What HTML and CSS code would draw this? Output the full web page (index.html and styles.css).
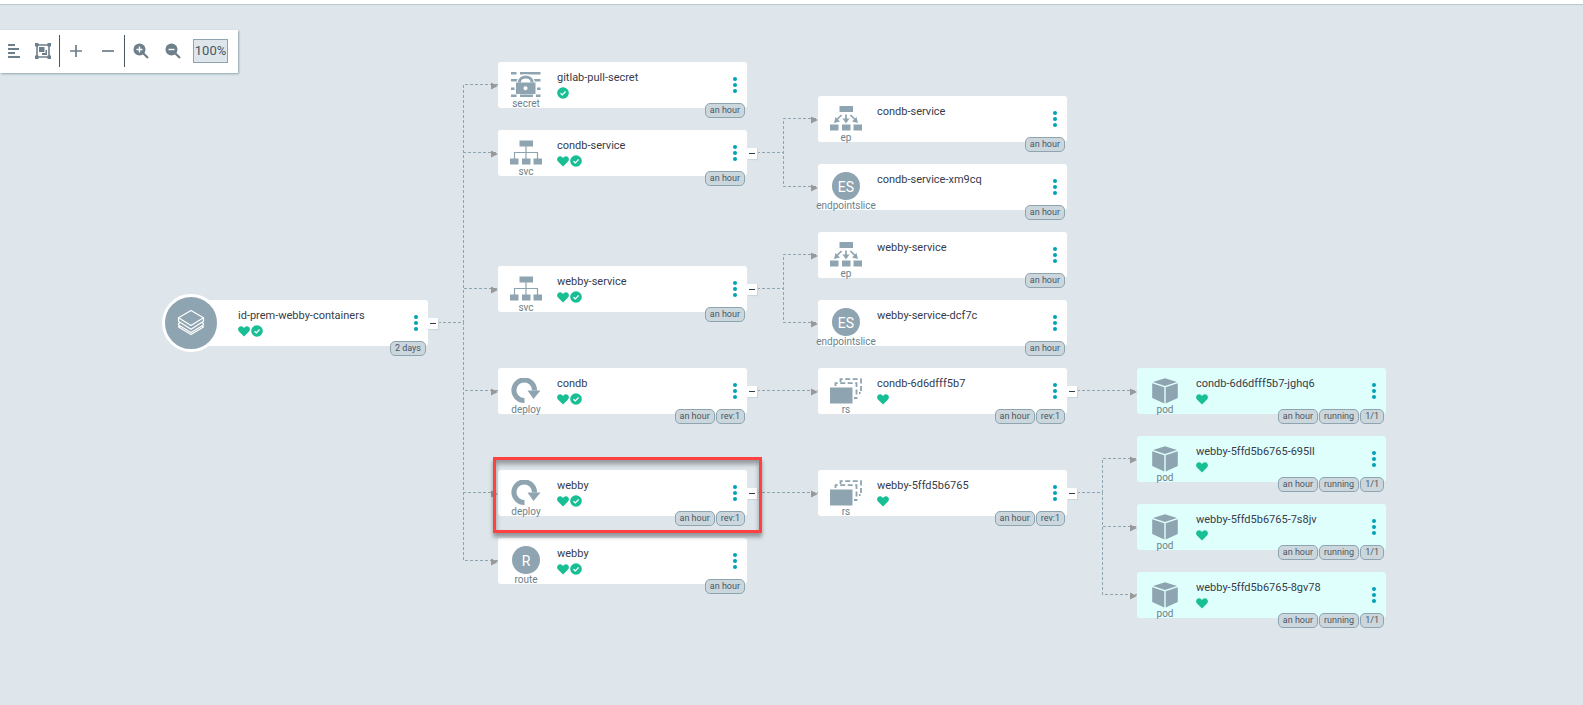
FILE: index.html
```
<!DOCTYPE html>
<html lang="en">
<head>
<meta charset="utf-8">
<title>Application resource tree</title>
<link rel="stylesheet" href="styles.css">
</head>
<body>
<svg class="defs" aria-hidden="true">
  <symbol id="heart" viewBox="0 0 12 11"><path d="M6 10.6 1 5.6C-.2 4.300-.2 2.300.9 1.200 2.200 0 4.100 0 5.300 1.200L6 1.900 6.700 1.200C7.900 0 9.800 0 11.100 1.200 12.200 2.300 12.200 4.300 11 5.600Z"/></symbol>
  <symbol id="check" viewBox="0 0 12 12"><circle cx="6" cy="6" r="5.800"/><path d="M3.500 6.200 5.300 7.900 8.600 4.500" fill="none" stroke="#fff" stroke-width="1.300"/></symbol>
  <symbol id="secret" viewBox="0 0 32 26"><path d="M1 0h5.500v2.500H1zM10 0h20.500v2.500H10zM1 7h7v2.500H1zM24 7h6.500v2.500H24zM1 15.500h3.500V18H1zM27 15.500h3.500V18H27zM1 22.500h5.500V25H1zM10 22.500h13v2.500H10zM26 22.500h4.500V25H26z"/><path d="M9.500 10V9.500a6.300 5.200 0 0 1 12.500 0v.5" fill="none" stroke="#fff" stroke-width="5.500"/><path d="M9.500 10.500V9.500a6.300 5.200 0 0 1 12.500 0v1" fill="none" stroke="currentColor" stroke-width="3"/><path fill-rule="evenodd" d="M6 10.500h19.500V22H6zM15.500 14.200a2 2 0 1 0 .01 0z"/></symbol>
  <symbol id="svc" viewBox="0 0 32 26"><path d="M9.500.5h13.500v6H9.500zM0 18.500h8.500v6H0zM12 18.500h8.500v6H12zM23.500 18.500H32v6h-8.500z"/><path d="M16 6v13M4.500 19v-6.500h23V19" fill="none" stroke="currentColor" stroke-width="1.200"/></symbol>
  <symbol id="ep" viewBox="0 0 32 26"><path d="M9.500 0h13.500v6H9.500zM0 18.500h8.500v6H0zM12 18.500h8.500v6H12zM23.500 18.500H32v6h-8.500z"/><path d="M11.500 9 7 13.500M16 8.500V14M20.500 9l4.500 4.500" fill="none" stroke="currentColor" stroke-width="1.700"/><path d="m4 17 1.500-6 4.500 4.500zM12.500 12.500h7L16 17.500zM28 17l-1.500-6-4.500 4.500z"/></symbol>
  <symbol id="deploy" viewBox="0 0 32 26"><path d="M14.500 22.500A10.300 10.300 0 1 1 24.500 12.500" fill="none" stroke="currentColor" stroke-width="5"/><path d="M17.500 12.500h13L23.500 21z"/></symbol>
  <symbol id="rs" viewBox="0 0 32 26"><path d="M0 9.500h22.500v16H0z"/><path d="M5.500 8V5.200H26.500V20H24M10.500 4V1.200H31V15H29" fill="none" stroke="currentColor" stroke-width="1.800" stroke-dasharray="5 2.500"/></symbol>
  <symbol id="pod" viewBox="0 0 26 26"><path d="M13 .2 25 4 13 8 1 4zM.2 5.200 12.300 9.200v16.300L.2 20zM25.800 5.200 13.700 9.200v16.300L25.800 20z"/></symbol>
  <symbol id="layers" viewBox="0 0 28 28"><path d="M14 1.500 26.500 8.700 14 16.500 1.500 8.700zM1.500 8.700v3.600L14 20.300 26.500 12.300V8.700M3.500 13.500 1.500 14.600v1.400L14 23.500l12.500-7.500v-1.400L24.500 13.500M3.500 16.800 1.500 18 14 25.500 26.500 18 24.500 16.800" fill="none" stroke="#fff" stroke-width="1.200" stroke-linejoin="round"/></symbol>
</svg>

<div class="toolbar" role="toolbar" aria-label="Tree view">
  <button class="tool" aria-label="Compact layout"><svg width="14" height="14" viewBox="0 0 14 14"><path d="M1 0h7v2H1zM1 4h11v2H1zM1 8h7v2H1zM1 12h12v2H1z"/></svg></button>
  <button class="tool" aria-label="Group nodes"><svg width="16" height="16" viewBox="0 0 16 16"><path d="M2 2h12v12H2z" fill="none" stroke="currentColor" stroke-width="1.600"/><path d="M0 0h3.500v3.500H0zM12.500 0H16v3.500h-3.500zM0 12.500h3.500V16H0zM12.500 12.500H16V16h-3.500zM4 4h5.500v5H4zM10.500 7H12v5H7v-2h3.500z"/></svg></button>
  <span class="divider"></span>
  <button class="tool" aria-label="Expand all"><svg width="14" height="14" viewBox="0 0 14 14"><path d="M7 1v12M1 7h12" stroke="currentColor" stroke-width="1.700"/></svg></button>
  <button class="tool" aria-label="Collapse all"><svg width="14" height="14" viewBox="0 0 14 14"><path d="M1 7h12" stroke="currentColor" stroke-width="1.700"/></svg></button>
  <span class="divider"></span>
  <button class="tool" aria-label="Zoom in"><svg width="16" height="16" viewBox="0 0 16 16"><circle cx="6.500" cy="6.500" r="6"/><path d="m10 10 5 5" stroke="currentColor" stroke-width="2.200"/><path d="M6.500 3.500v6M3.500 6.500h6" stroke="#fff" stroke-width="1.400"/></svg></button>
  <button class="tool" aria-label="Zoom out"><svg width="16" height="16" viewBox="0 0 16 16"><circle cx="6.500" cy="6.500" r="6"/><path d="m10 10 5 5" stroke="currentColor" stroke-width="2.200"/><path d="M3.500 6.500h6" stroke="#fff" stroke-width="1.400"/></svg></button>
  <output class="scale">100%</output>
</div>

<main class="tree" id="tree">
  <svg class="edges" id="edges" aria-hidden="true"></svg>
</main>
<script src="tree.js"></script>
</body>
</html>
```

FILE: styles.css
```
* { box-sizing: border-box; }

body {
  margin: 0;
  min-height: 100vh;
  background: #dee6eb;
  border-top: 4px solid #fff;
  box-shadow: inset 0 2px 1px -1px #b9c6cd;
  font-family: Roboto, "Liberation Sans", sans-serif;
  color: #363c4a;
  overflow: hidden;
}

button { border: 0; padding: 0; background: none; color: inherit; font: inherit; cursor: pointer; }
svg { fill: currentColor; display: block; }
.defs { position: absolute; width: 0; height: 0; }

.toolbar {
  position: absolute;
  z-index: 2;
  top: 30px;
  left: 0;
  display: flex;
  align-items: center;
  height: 43px;
  padding: 0 10px 2px 0;
  background: #fff;
  box-shadow: 1px 1px 2px #8fa4b1;
  color: #6d7f8b;
}
.tool { display: grid; place-items: center; width: 32px; height: 32px; }
.tool:first-child { width: 27px; }
.divider { width: 1px; height: 32px; background: #495763; }
.scale {
  margin-left: 4px;
  width: 35px;
  height: 24px;
  border: 1px solid #8fa4b1;
  background: #dee6eb;
  font-size: 13px;
  line-height: 22px;
  text-align: center;
  color: #495763;
}

.tree { position: absolute; inset: 0; }
.edges { position: absolute; left: 0; top: 0; width: 100%; height: 100%; }
.edge { fill: none; stroke: #8fa4b1; stroke-dasharray: 3 2; shape-rendering: crispEdges; }
.arrow { fill: #999; }

.node {
  position: absolute;
  display: flex;
  width: 249px;
  height: 46px;
  border-radius: 3px;
  background: #fff;
}
.node.pod { background: #dffffd; }
.kind {
  flex: none;
  display: flex;
  flex-direction: column;
  align-items: center;
  width: 56px;
  padding-top: 10px;
  color: #8fa4b1;
}
.kind svg { flex: none; width: 32px; height: 26px; }
.kind-name { font-size: 10px; line-height: 12px; color: #6d7f8b; }
.kind:has(.letters) { padding-top: 8px; }
.letters {
  flex: none;
  width: 28px;
  height: 28px;
  border-radius: 50%;
  background: #8fa4b1;
  color: #fff;
  font-size: 14px;
  line-height: 30px;
  text-align: center;
}
.info { flex: 1; padding: 8px 0 0 3px; }
.name { font-size: 11px; line-height: 16px; white-space: nowrap; }
.status { display: flex; align-items: center; gap: 1px; height: 12px; margin-top: 1px; color: #18be94; }
.status svg { width: 12px; height: 12px; }
.status .heart { height: 11px; }
.menu {
  flex: none;
  display: grid;
  place-content: center;
  gap: 2px;
  width: 24px;
}
.menu i { width: 4px; height: 4px; border-radius: 50%; background: #00a2b3; }
.tags { position: absolute; right: 2px; bottom: -10px; display: flex; gap: 1px; }
.tag {
  height: 15px;
  padding: 0 4px;
  border: 1px solid #8fa4b1;
  border-radius: 5px;
  background: #ccd6dd;
  font-size: 9px;
  line-height: 13px;
  color: #495763;
  white-space: nowrap;
}
.collapse {
  position: absolute;
  left: 100%;
  top: 18px;
  display: grid;
  place-items: center;
  width: 10px;
  height: 11px;
  background: #fff;
  box-shadow: 1px 1px 1px #ccd6dd;
}
.collapse::before { content: ""; width: 6px; height: 1px; background: #363c4a; }

.node.app .kind {
  position: absolute;
  left: -17px;
  top: -6px;
  width: 58px;
  height: 58px;
  padding: 0;
  justify-content: center;
  border: 3px solid #fff;
  border-radius: 50%;
  background: #8fa4b1;
}
.node.app .kind svg { width: 28px; height: 28px; }
.node.app .info { padding-left: 59px; }

.highlight {
  position: absolute;
  border: 3px solid #ff4241;
  box-shadow: 0 4px 4px rgba(0, 0, 0, .35), inset 0 4px 5px rgba(0, 0, 0, .35);
  pointer-events: none;
}
```

FILE: tree.js
```
const nodes = [
  { id: "app", kind: "app", icon: "layers", name: "id-prem-webby-containers", x: 179, y: 300, status: "hc", tags: ["2 days"] },
  { kind: "secret", name: "gitlab-pull-secret", x: 498, y: 62, status: "c", tags: ["an hour"], parent: "app" },
  { id: "s1", kind: "svc", name: "condb-service", x: 498, y: 130, status: "hc", tags: ["an hour"], parent: "app" },
  { id: "s2", kind: "svc", name: "webby-service", x: 498, y: 266, status: "hc", tags: ["an hour"], parent: "app" },
  { id: "d1", kind: "deploy", name: "condb", x: 498, y: 368, status: "hc", tags: ["an hour", "rev:1"], parent: "app" },
  { id: "d2", kind: "deploy", name: "webby", x: 498, y: 470, status: "hc", tags: ["an hour", "rev:1"], parent: "app" },
  { kind: "route", letters: "R", name: "webby", x: 498, y: 538, status: "hc", tags: ["an hour"], parent: "app" },
  { kind: "ep", name: "condb-service", x: 818, y: 96, status: "", tags: ["an hour"], parent: "s1" },
  { kind: "endpointslice", letters: "ES", name: "condb-service-xm9cq", x: 818, y: 164, status: "", tags: ["an hour"], parent: "s1" },
  { kind: "ep", name: "webby-service", x: 818, y: 232, status: "", tags: ["an hour"], parent: "s2" },
  { kind: "endpointslice", letters: "ES", name: "webby-service-dcf7c", x: 818, y: 300, status: "", tags: ["an hour"], parent: "s2" },
  { id: "r1", kind: "rs", name: "condb-6d6dfff5b7", x: 818, y: 368, status: "h", tags: ["an hour", "rev:1"], parent: "d1" },
  { id: "r2", kind: "rs", name: "webby-5ffd5b6765", x: 818, y: 470, status: "h", tags: ["an hour", "rev:1"], parent: "d2" },
  { kind: "pod", name: "condb-6d6dfff5b7-jghq6", x: 1137, y: 368, status: "h", tags: ["an hour", "running", "1/1"], parent: "r1" },
  { kind: "pod", name: "webby-5ffd5b6765-695ll", x: 1137, y: 436, status: "h", tags: ["an hour", "running", "1/1"], parent: "r2" },
  { kind: "pod", name: "webby-5ffd5b6765-7s8jv", x: 1137, y: 504, status: "h", tags: ["an hour", "running", "1/1"], parent: "r2" },
  { kind: "pod", name: "webby-5ffd5b6765-8gv78", x: 1137, y: 572, status: "h", tags: ["an hour", "running", "1/1"], parent: "r2" }
];

const WIDTH = 249;
const MIDDLE = 22;
const use = (id, cls = "") => `<svg class="${cls}"><use href="#${id}"/></svg>`;
const byId = Object.fromEntries(nodes.filter(n => n.id).map(n => [n.id, n]));

// Each node is placed on the canvas by its own coordinates.
const cards = nodes.map(n => `
  <article class="node ${n.kind}" style="left:${n.x}px;top:${n.y}px">
    <div class="kind">
      ${n.letters ? `<span class="letters">${n.letters}</span>` : use(n.icon || n.kind)}
      ${n.kind === "app" ? "" : `<span class="kind-name">${n.kind}</span>`}
    </div>
    <div class="info">
      <div class="name">${n.name}</div>
      <div class="status">${n.status.includes("h") ? use("heart", "heart") : ""}${n.status.includes("c") ? use("check") : ""}</div>
    </div>
    <button class="menu" aria-label="Actions for ${n.name}"><i></i><i></i><i></i></button>
    <div class="tags">${n.tags.map(t => `<span class="tag">${t}</span>`).join("")}</div>
    ${n.id ? `<button class="collapse" aria-label="Collapse ${n.name}"></button>` : ""}
  </article>`).join("");

// Orthogonal edges: parent, vertical trunk, child arrow.
const edges = nodes.filter(n => n.parent).map(n => {
  const p = byId[n.parent];
  const trunk = n.x - 34.5;
  const y1 = p.y + MIDDLE + 0.5;
  const y2 = n.y + MIDDLE + 0.5;
  const path = y1 === y2
    ? `M${p.x + WIDTH + 10} ${y1}H${n.x}`
    : `M${p.x + WIDTH + 10} ${y1}H${trunk}V${y2}H${n.x}`;
  return `<path class="edge" d="${path}"/><path class="arrow" d="M${n.x - 7} ${y2 - 2}l7 3.500-7 3.500z"/>`;
}).join("");

document.getElementById("edges").innerHTML = edges;
document.getElementById("tree").insertAdjacentHTML("beforeend",
  cards + `<div class="highlight" style="left:493px;top:457px;width:269px;height:76px"></div>`);
```
